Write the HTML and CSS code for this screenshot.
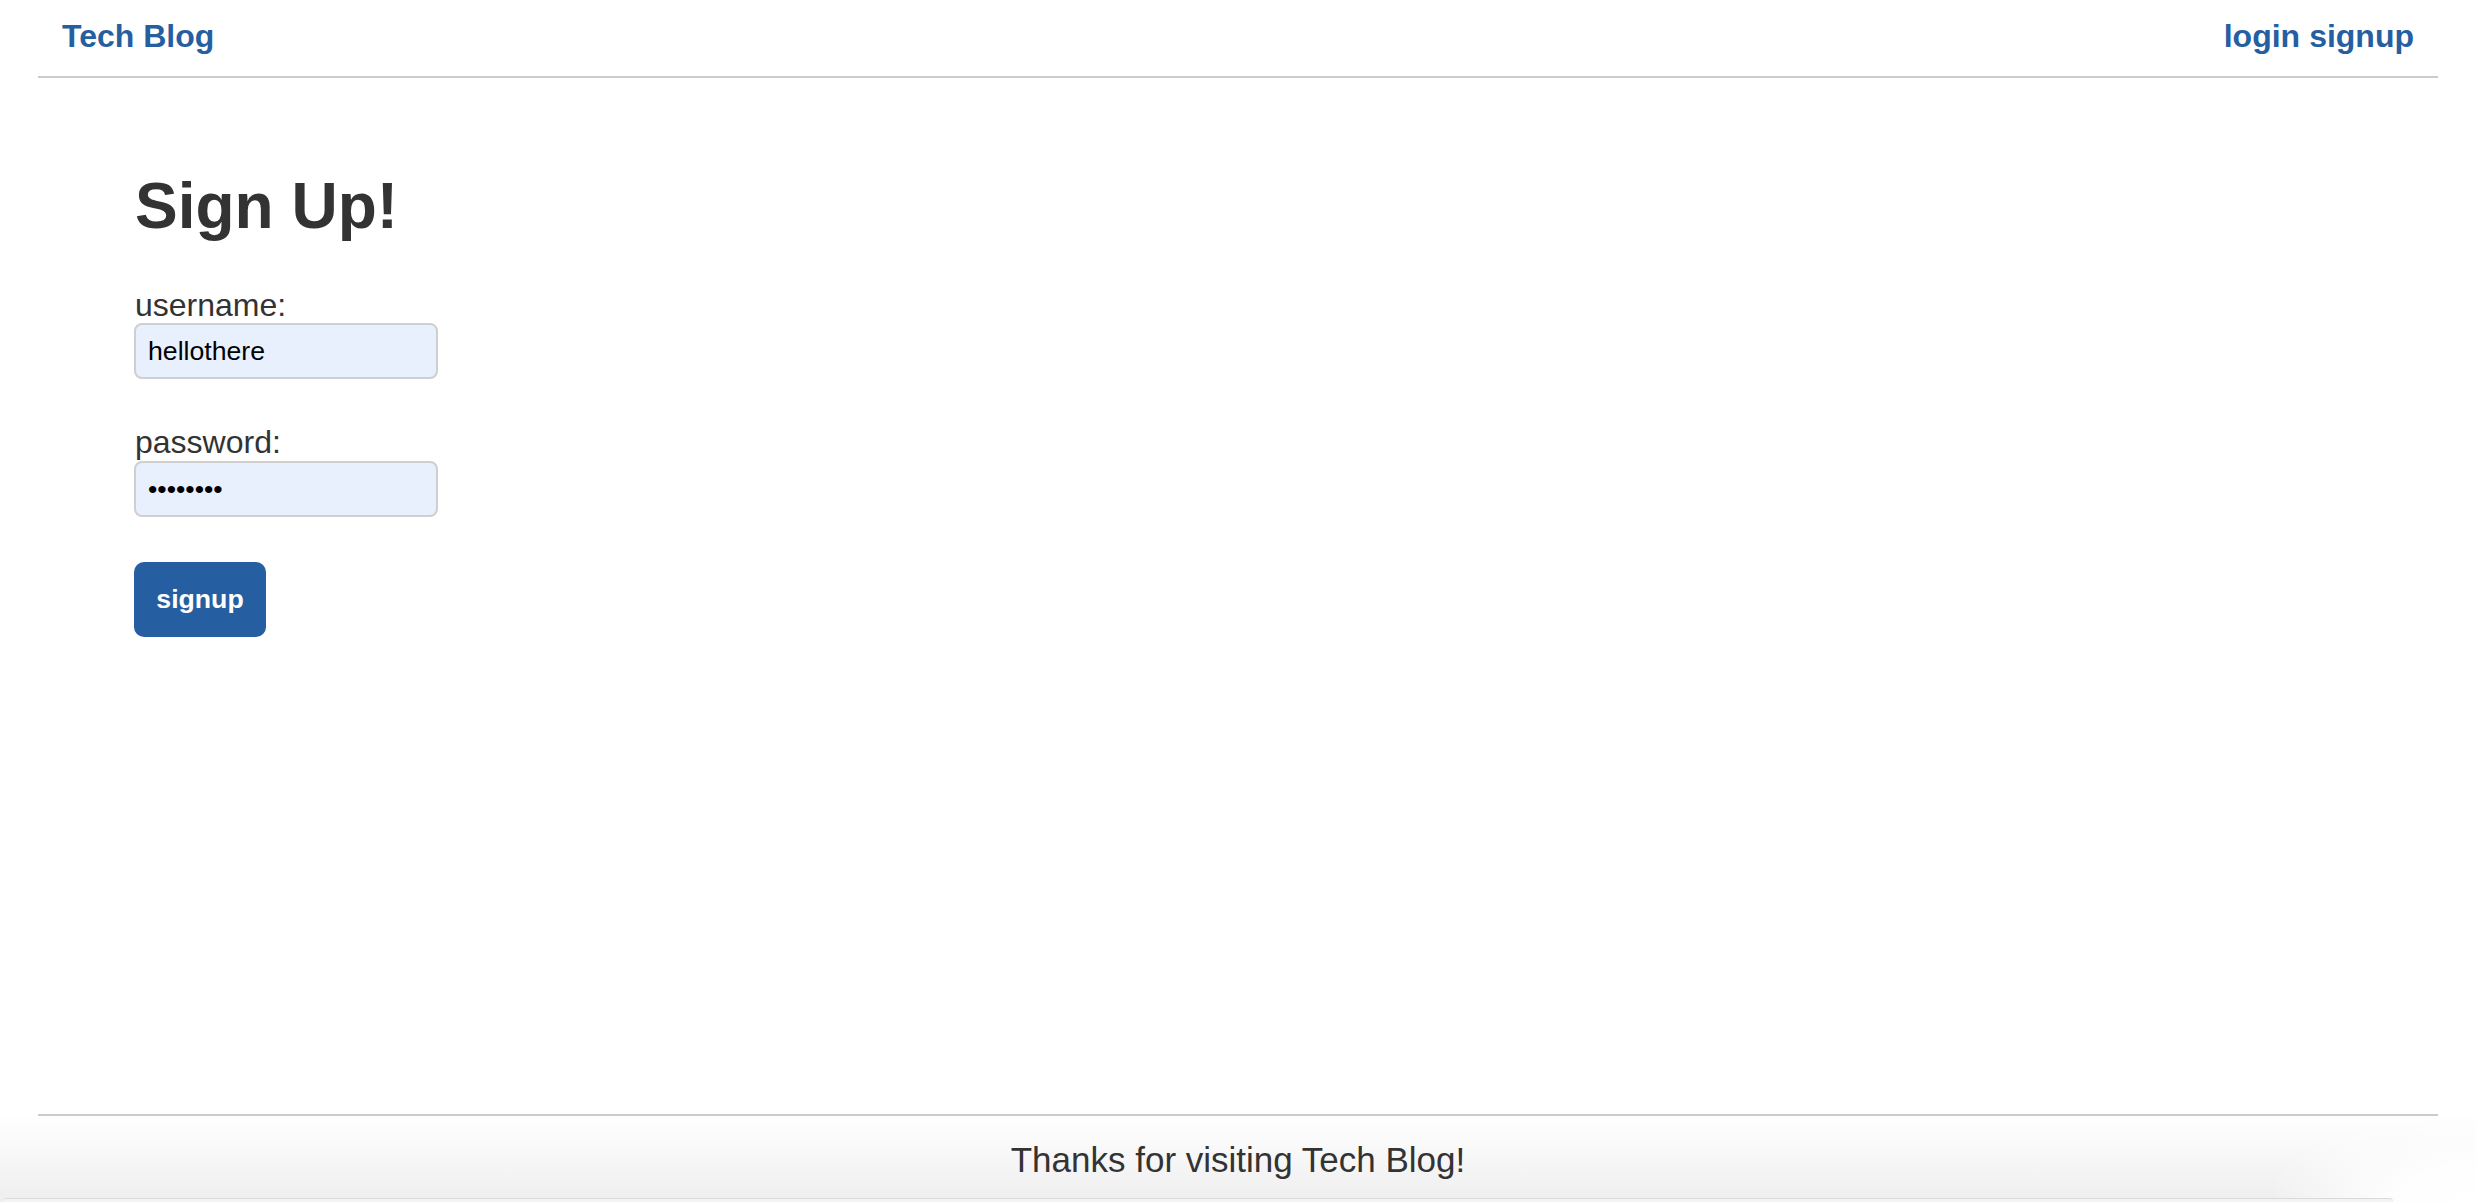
FILE: index.html
```html
<!DOCTYPE html>
<html lang="en">
<head>
<meta charset="utf-8">
<title>Tech Blog</title>
<link rel="stylesheet" href="styles.css">
</head>
<body>
<div class="page">
  <header class="site-header">
    <a class="brand" href="#">Tech Blog</a>
    <nav class="nav">
      <a href="#">login</a>
      <a href="#">signup</a>
    </nav>
  </header>
  <main class="main">
    <h1 class="title">Sign Up!</h1>
    <form class="form">
      <div class="field">
        <label class="label" for="username">username:</label>
        <input class="input" id="username" type="text" value="hellothere">
      </div>
      <div class="field">
        <label class="label" for="password">password:</label>
        <input class="input" id="password" type="password" value="12345678">
      </div>
      <button class="btn" type="button">signup</button>
    </form>
  </main>
  <footer class="site-footer">
    <div class="footer-inner">Thanks for visiting Tech Blog!</div>
  </footer>
</div>
</body>
</html>
```
FILE: styles.css
```css
html, body {
  margin: 0;
  padding: 0;
  background: #fff;
}
body {
  font-family: "Liberation Sans", Arial, Helvetica, sans-serif;
  color: #333;
}
.page {
  min-height: 100vh;
  display: flex;
  flex-direction: column;
}
.site-header {
  margin: 0 38px;
  padding: 18px 24px 21px 24px;
  border-bottom: 2px solid #cccccc;
  display: flex;
  justify-content: space-between;
  align-items: center;
}
.site-header a {
  color: #265ea2;
  text-decoration: none;
  font-weight: bold;
  font-size: 32px;
}
.nav {
  display: flex;
  gap: 9px;
}
.main {
  flex: 1;
  padding: 0 0 0 134px;
}
.title {
  margin: 92px 0 43px 1px;
  font-size: 64px;
  font-weight: bold;
  line-height: 73.6px;
  color: #333;
}
.form {
  display: flex;
  flex-direction: column;
  align-items: flex-start;
}
.field {
  display: flex;
  flex-direction: column;
  align-items: flex-start;
  margin-bottom: 45px;
}
.label {
  margin-left: 1px;
  font-size: 32px;
  line-height: 36.8px;
  color: #333;
}
.input {
  box-sizing: border-box;
  width: 304px;
  height: 56px;
  margin: 0;
  padding: 0 12px;
  border: 2px solid #cfcfcf;
  border-radius: 8px;
  background: #e8f0fe;
  font-family: "Liberation Sans", Arial, sans-serif;
  font-size: 26.67px;
  color: #000;
  outline: none;
}
.btn {
  box-sizing: border-box;
  width: 132px;
  height: 75px;
  margin: 0;
  padding: 0;
  border: none;
  border-radius: 10px;
  background: #265ea2;
  color: #fff;
  font-family: "Liberation Sans", Arial, sans-serif;
  font-size: 26.67px;
  font-weight: bold;
  cursor: pointer;
}
.site-footer {
  position: relative;
  background: linear-gradient(to bottom, #ffffff 0%, #fbfbfb 25%, #efefef 95%);
  padding: 0 0 22px;
}
.site-footer::before {
  content: "";
  position: absolute;
  right: 0;
  bottom: 0;
  width: 200px;
  height: 88px;
  background: radial-gradient(ellipse at 100% 100%, #ffffff 0, rgba(255,255,255,0.9) 30%, rgba(255,255,255,0) 75%);
}
.site-footer::after {
  content: "";
  position: absolute;
  left: 4px;
  right: 83px;
  bottom: 0;
  height: 3px;
  border-top: 1px solid #d9d9d9;
  border-top-left-radius: 6px;
  border-top-right-radius: 10px;
  background: #f4f4f4;
}
.footer-inner {
  position: relative;
  z-index: 1;
  margin: 0 38px;
  border-top: 2px solid #cccccc;
  padding-top: 24px;
  text-align: center;
  font-size: 35px;
  line-height: 40.3px;
  color: #333;
}
```
